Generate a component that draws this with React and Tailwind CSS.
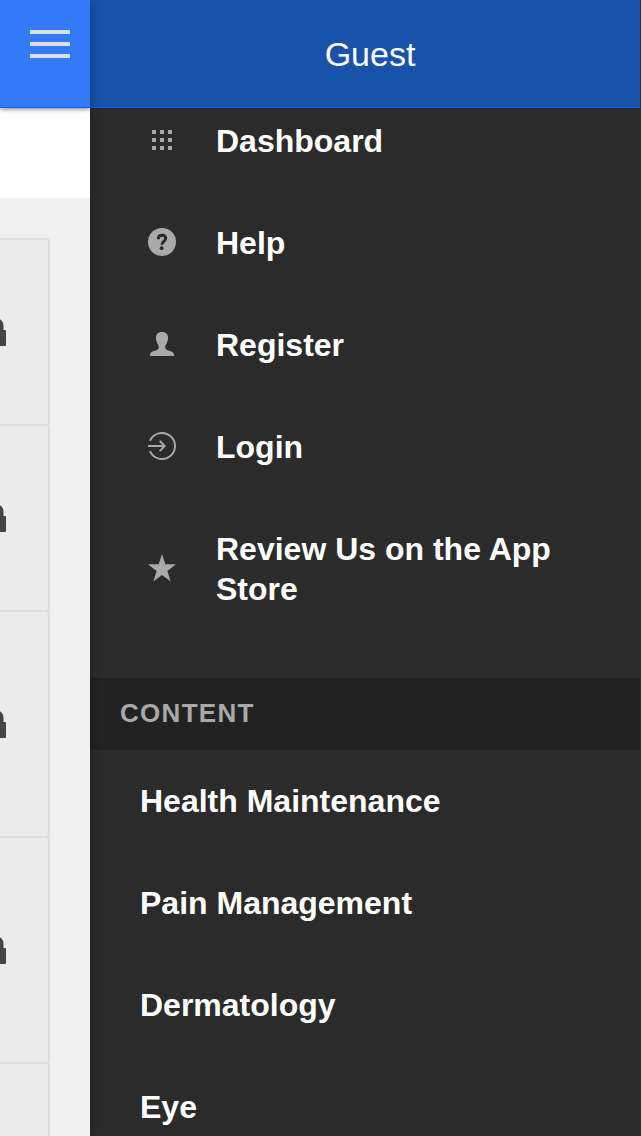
import React from "react";

const iconClass = "mb-0.5 size-7 shrink-0 fill-[#a9a9a9]";

function GridIcon() {
  const steps = [4, 12, 20];
  return (
    <svg viewBox="0 0 28 28" className={iconClass} aria-hidden="true">
      {steps.map((y) =>
        steps.map((x) => <rect key={`${x}-${y}`} x={x} y={y} width="4" height="4" rx="0.6" />)
      )}
    </svg>
  );
}

function HelpIcon() {
  return (
    <svg viewBox="0 0 28 28" className={iconClass} aria-hidden="true">
      <circle cx="14" cy="14" r="14" />
      <path
        d="M10.300 11.200C10.300 8.800 11.700 7.300 14 7.300s3.700 1.300 3.700 3.300c0 2.700-3.900 2.900-3.900 6.200"
        fill="none"
        stroke="#2b2b2b"
        strokeWidth="2.9"
      />
      <circle cx="13.6" cy="20.2" r="1.9" fill="#2b2b2b" />
    </svg>
  );
}

function PersonIcon() {
  return (
    <svg viewBox="0 0 28 28" className={iconClass} aria-hidden="true">
      <path d="M2 26C2 23.800 2.300 22.600 4 21.800 6.500 20.700 9.600 20.300 10.400 18.800 10.900 17.800 10.700 16 10.300 15 9.200 13.700 8.800 12.500 8.600 11 8 10.400 7.700 9.500 8 8.500 7.800 4.300 9.700 2 14 2S20.200 4.300 20 8.500C20.300 9.500 20 10.400 19.400 11 19.200 12.500 18.800 13.700 17.700 15 17.300 16 17.100 17.800 17.600 18.800 18.400 20.300 21.500 20.700 24 21.800 25.700 22.600 26 23.800 26 26z" />
    </svg>
  );
}

function LoginIcon() {
  return (
    <svg viewBox="0 0 28 28" className={iconClass} aria-hidden="true">
      <path
        d="M2 8.800A13.050 13.050 0 1 1 2 19.200M0 14h16.500M11.700 8.900 16.600 14l-4.900 5.100"
        fill="none"
        stroke="#a9a9a9"
        strokeWidth="2"
      />
    </svg>
  );
}

function StarIcon() {
  return (
    <svg viewBox="0 0 28 28" className={iconClass} aria-hidden="true">
      <path d="M14 0 17.300 10.300H28L19.400 16.900 22.700 27.500 14 21 5.300 27.500 8.600 16.900 0 10.300H10.700z" />
    </svg>
  );
}

function LockIcon() {
  return (
    <svg viewBox="0 0 20 28" className="h-7 w-5 shrink-0" aria-hidden="true">
      <path d="M4.500 13V7.500a5.500 5.500 0 0 1 11 0V13" fill="none" stroke="#444" strokeWidth="4" />
      <rect y="12" width="20" height="16" rx="1" fill="#444" />
    </svg>
  );
}

const actions = [
  { label: "Dashboard", Icon: GridIcon },
  { label: "Help", Icon: HelpIcon },
  { label: "Register", Icon: PersonIcon },
  { label: "Login", Icon: LoginIcon },
  { label: "Review Us on the App Store", Icon: StarIcon },
];

const topics = ["Health Maintenance", "Pain Management", "Dermatology", "Eye"];

const cards = ["h-[188px]", "h-[188px]", "h-[228px]", "h-[228px]", "h-[228px]"];

export default function App() {
  return (
    <div className="flex h-screen overflow-hidden bg-[#2b2b2b] font-['Liberation_Sans',Arial,sans-serif]">
      <main className="relative z-10 flex w-[90px] shrink-0 flex-col bg-[#f1f1f1] shadow-[0_0_10px_rgba(0,0,0,0.3)]">
        <div className="flex min-h-0 flex-1 flex-col overflow-hidden">
          <header className="z-10 flex h-[108px] shrink-0 items-start justify-end border-b border-[#0c60ee] bg-[#327af8] px-5 pt-5 shadow-[0_1px_5px_rgba(0,0,0,0.5)]">
            <button
              type="button"
              aria-label="Toggle menu"
              className="flex h-12 w-[50px] shrink-0 flex-col items-end justify-center gap-2"
            >
              <span className="h-1 w-10 bg-[#dddddd]" />
              <span className="h-1 w-10 bg-[#dddddd]" />
              <span className="h-1 w-10 bg-[#dddddd]" />
            </button>
          </header>
          <div className="h-[90px] shrink-0 bg-white" />
          <ul className="-ml-10 mr-10 mt-10">
            {cards.map((height, i) => (
              <li
                key={i}
                className={`-mb-0.5 flex items-center justify-end rounded-[4px] border-2 border-[#dddddd] bg-[#ebebeb] pr-[42px] ${height}`}
              >
                <LockIcon />
              </li>
            ))}
          </ul>
        </div>
      </main>

      <aside className="flex min-w-0 flex-1 flex-col border-r border-[#2b2b2b]">
        <header className="flex h-[108px] shrink-0 items-center justify-center border-b border-[#0c60ee] bg-[#1a52aa] pl-[10px]">
          <h1 className="text-[34px] leading-10 text-white">Guest</h1>
        </header>
        <nav className="min-h-0 flex-1 overflow-hidden text-[32px] font-bold leading-10 text-white">
          <ul className="-mt-[18px] pb-[38px]">
            {actions.map(({ label, Icon }) => (
              <li key={label}>
                <a href="#" className="flex items-center gap-10 py-[31px] pl-[58px] pr-10">
                  <Icon />
                  <span>{label}</span>
                </a>
              </li>
            ))}
          </ul>
          <h2 className="bg-[#222222] px-[30px] pb-[17px] pt-[15px] text-[26px] tracking-wider text-[#a9a9a9]">
            CONTENT
          </h2>
          <ul>
            {topics.map((topic) => (
              <li key={topic}>
                <a href="#" className="block px-[50px] py-[31px]">
                  {topic}
                </a>
              </li>
            ))}
          </ul>
        </nav>
      </aside>
    </div>
  );
}
